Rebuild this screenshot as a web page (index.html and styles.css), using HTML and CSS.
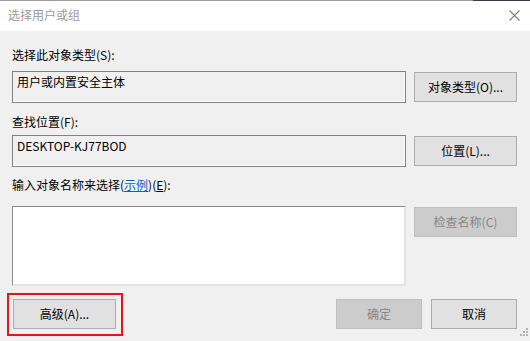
FILE: index.html
```html
<!DOCTYPE html>
<html lang="zh-CN">
<head>
<meta charset="utf-8">
<title>选择用户或组</title>
<link rel="stylesheet" href="styles.css">
</head>
<body>
<div class="window">
  <div class="topline"></div>
  <div class="titlebar">
    <span class="title">选择用户或组</span>
    <svg class="close" width="11" height="11" viewBox="0 0 11 11"><path d="M0.5 0.5 L10.5 10.5 M10.5 0.5 L0.5 10.5" stroke="#808080" stroke-width="1.1" fill="none"/></svg>
  </div>
  <div class="content">
    <div class="label l1">选择此对象类型(S):</div>
    <div class="row r1">
      <div class="field">用户或内置安全主体</div>
      <div class="btn">对象类型(O)...</div>
    </div>
    <div class="label l2">查找位置(F):</div>
    <div class="row r2">
      <div class="field">DESKTOP-KJ77BOD</div>
      <div class="btn">位置(L)...</div>
    </div>
    <div class="label l3">输入对象名称来选择(<span class="link">示例</span>)(<u>E</u>):</div>
    <div class="row r3">
      <div class="textarea"></div>
      <div class="btn disabled">检查名称(C)</div>
    </div>
    <div class="bottom">
      <div class="adv-wrap"><div class="btn adv">高级(A)...</div></div>
      <div class="spacer"></div>
      <div class="btn small disabled">确定</div>
      <div class="btn small">取消</div>
    </div>
  </div>
  <svg class="grip" width="12" height="12" viewBox="0 0 12 12">
    <rect x="9" y="0" width="2" height="2" fill="#b4b4b4"/>
    <rect x="6" y="3" width="2" height="2" fill="#b4b4b4"/>
    <rect x="9" y="3" width="2" height="2" fill="#b4b4b4"/>
    <rect x="3" y="6" width="2" height="2" fill="#b4b4b4"/>
    <rect x="6" y="6" width="2" height="2" fill="#b4b4b4"/>
    <rect x="9" y="6" width="2" height="2" fill="#b4b4b4"/>
  </svg>
</div>
</body>
</html>
```
FILE: styles.css
```css
html, body {
  margin: 0;
  padding: 0;
  background: #f0f0f0;
}
.window {
  position: relative;
  width: 530px;
  height: 341px;
  background: #f0f0f0;
  font-family: "Noto Sans CJK SC", "Noto Sans", sans-serif;
  font-size: 12px;
  color: #000;
  overflow: hidden;
}
.topline {
  height: 1px;
  background: linear-gradient(to right, #9c9c9c 0, #9c9c9c 473px, #3b3b48 473px, #3b3b48 100%);
}
.titlebar {
  height: 30px;
  background: #fff;
  display: flex;
  align-items: center;
  justify-content: space-between;
  padding: 0 10px 0 8px;
}
.title {
  color: #9a9a9a;
  line-height: 16px;
  margin-top: -2px;
}
.close {
  display: block;
  margin-top: -1px;
}
.content {
  padding: 0 13px 0 12px;
}
.label {
  line-height: 16px;
  height: 16px;
  white-space: nowrap;
}
.l1 { margin-top: 16px; }
.l2 { margin-top: 11px; }
.l3 { margin-top: 10px; }
.row {
  display: flex;
  gap: 8px;
}
.r1 { margin-top: 8px; align-items: center; }
.r2 { margin-top: 5px; align-items: center; }
.r3 { margin-top: 13px; align-items: flex-start; }
.field {
  box-sizing: border-box;
  width: 394px;
  height: 32px;
  border: 1px solid #828282;
  box-shadow: inset -1px -1px 0 #fff;
  background: #f0f0f0;
  padding: 2px 0 0 4px;
  line-height: 16px;
  white-space: nowrap;
}
.textarea {
  box-sizing: border-box;
  width: 394px;
  height: 80px;
  background: #fff;
  border-top: 1px solid #8a8a8a;
  border-left: 1px solid #8a8a8a;
  border-right: 2px solid #e3e3e3;
  border-bottom: 2px solid #e3e3e3;
}
.r3 .btn { margin-top: 1px; }
.btn {
  box-sizing: border-box;
  width: 103px;
  height: 30px;
  background: #e1e1e1;
  border: 1px solid #adadad;
  display: flex;
  align-items: center;
  justify-content: center;
  line-height: 16px;
  white-space: nowrap;
  padding-bottom: 1px;
}
.btn.disabled {
  background: #cccccc;
  border-color: #bfbfbf;
  color: #878787;
}
.link {
  color: #0066cc;
  text-decoration: underline;
}
.bottom {
  display: flex;
  align-items: center;
  margin-top: 13px;
  gap: 9px;
}
.spacer { flex: 1; }
.adv-wrap {
  position: relative;
  margin-left: 1px;
}
.adv-wrap::after {
  content: "";
  position: absolute;
  left: -6px;
  top: -6px;
  right: -7px;
  bottom: -7px;
  border: 2px solid #e8121d;
}
.btn.small {
  width: 86px;
}
.grip {
  position: absolute;
  right: 1px;
  bottom: 1px;
}
```
